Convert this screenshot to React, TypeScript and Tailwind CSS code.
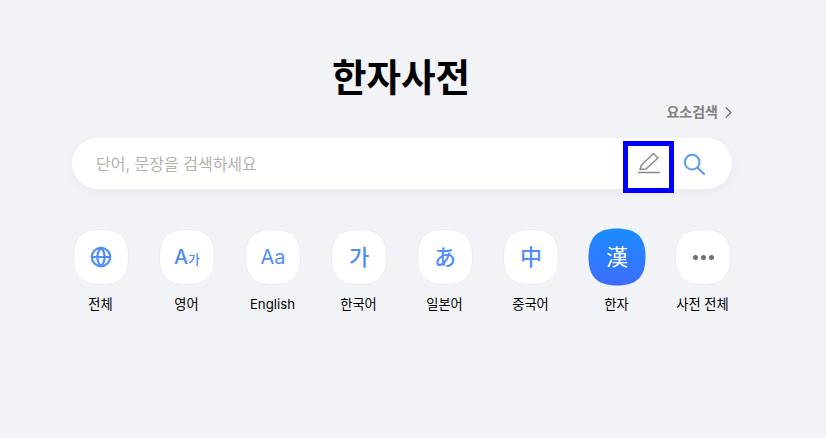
import { ChevronRight, Globe } from 'lucide-react';
import type { ReactNode } from 'react';

const SQUIRCLE = 'M28.5 .5C48 .5 56.5 9 56.5 28.5S48 56.5 28.5 56.5 .5 48 .5 28.5 9 .5 28.5 .5Z';

function Tile({ children, active }: { children: ReactNode; active?: boolean }) {
  return (
    <div className={`relative flex items-center justify-center ${active ? 'mx-[-1px] h-[58px] w-[58px]' : 'my-px h-[56px] w-[56px]'}`}>
      <svg viewBox="0 0 57 57" className="absolute inset-0 h-full w-full">
        <defs>
          <linearGradient id="hanja" x1="0" y1="0" x2="0" y2="1">
            <stop offset="0" stopColor="#1b8cff" />
            <stop offset="1" stopColor="#3d6dff" />
          </linearGradient>
        </defs>
        <path
          d={SQUIRCLE}
          fill={active ? 'url(#hanja)' : '#ffffff'}
          stroke={active ? 'none' : '#eaecf1'}
        />
      </svg>
      <span className="relative flex items-center justify-center">{children}</span>
    </div>
  );
}

function Glyph({ children, active }: { children: ReactNode; active?: boolean }) {
  return (
    <span className={`text-[22px] leading-none ${active ? 'font-normal text-white' : 'font-medium text-[#4f8dfb]'}`}>
      {children}
    </span>
  );
}

const items: { label: string; icon: ReactNode; active?: boolean }[] = [
  { label: '전체', icon: <Globe size={22} strokeWidth={2.4} className="text-[#4f8dfb]" /> },
  {
    label: '영어',
    icon: (
      <span className="flex items-baseline leading-none font-medium text-[#4f8dfb]">
        <span className="text-[20px]">A</span>
        <span className="text-[13px]">가</span>
      </span>
    ),
  },
  { label: 'English', icon: <span className="text-[20px] leading-none font-normal text-[#4f8dfb]">Aa</span> },
  { label: '한국어', icon: <Glyph>가</Glyph> },
  { label: '일본어', icon: <Glyph>あ</Glyph> },
  { label: '중국어', icon: <Glyph>中</Glyph> },
  { label: '한자', icon: <Glyph active>漢</Glyph>, active: true },
  {
    label: '사전 전체',
    icon: (
      <span className="flex gap-[3px]">
        <span className="h-[5px] w-[5px] rounded-full bg-[#6f6f6f]" />
        <span className="h-[5px] w-[5px] rounded-full bg-[#6f6f6f]" />
        <span className="h-[5px] w-[5px] rounded-full bg-[#6f6f6f]" />
      </span>
    ),
  },
];

export default function App() {
  return (
    <div className="h-[438px] w-[826px] overflow-hidden bg-[#f1f3f7] font-['Inter','Noto_Sans_CJK_KR',sans-serif]">
      <div className="flex w-[804px] flex-col items-center pt-[52px]">
        <h1 className="pr-[2px] text-[37.5px] leading-[52px] font-bold text-black">한자사전</h1>

        <div className="mt-[-2px] flex w-[660px] items-center justify-end gap-[1px] text-[14px] leading-[20px] font-bold text-[#808080]">
          <span>요소검색</span>
          <ChevronRight size={19} strokeWidth={1.4} className="mr-[-6px] text-[#666666]" />
        </div>

        <div className="relative mt-[16px] flex h-[51px] w-[660px] items-center rounded-full bg-white pr-[27px] pl-[24px] shadow-[0_4px_12px_rgba(60,70,100,0.05)]">
          <span className="flex-1 text-[16px] text-[#b5b2ac]">단어, 문장을 검색하세요</span>
          <svg width="24" height="24" viewBox="0 0 24 24" fill="none" className="mr-[23px] text-[#8a8a8a]" stroke="currentColor" strokeWidth="1.5">
            <path d="M2 20.5h22" />
            <path d="M4 17.5l1.5-4.5L17.5 1.5l4.5 4.5L10 17l-6 .5Z" strokeLinejoin="round" />
          </svg>
          <svg width="22" height="22" viewBox="0 0 24 24" fill="none" stroke="#5a9bf0" strokeWidth="2.2" strokeLinecap="round">
            <circle cx="10" cy="10" r="8" />
            <path d="M16 16l7 7" />
          </svg>
          <div className="absolute top-[3px] left-[551px] h-[52px] w-[51px] border-[5px] border-[#0000ff]" />
        </div>

        <div className="mt-[39px] flex w-[688px]">
          {items.map((item) => (
            <div key={item.label} className="flex w-[86px] flex-col items-center">
              <Tile active={item.active}>{item.icon}</Tile>
              <span className="mt-[9px] pr-px text-[13.25px] leading-[18px] text-black">{item.label}</span>
            </div>
          ))}
        </div>
      </div>
    </div>
  );
}
